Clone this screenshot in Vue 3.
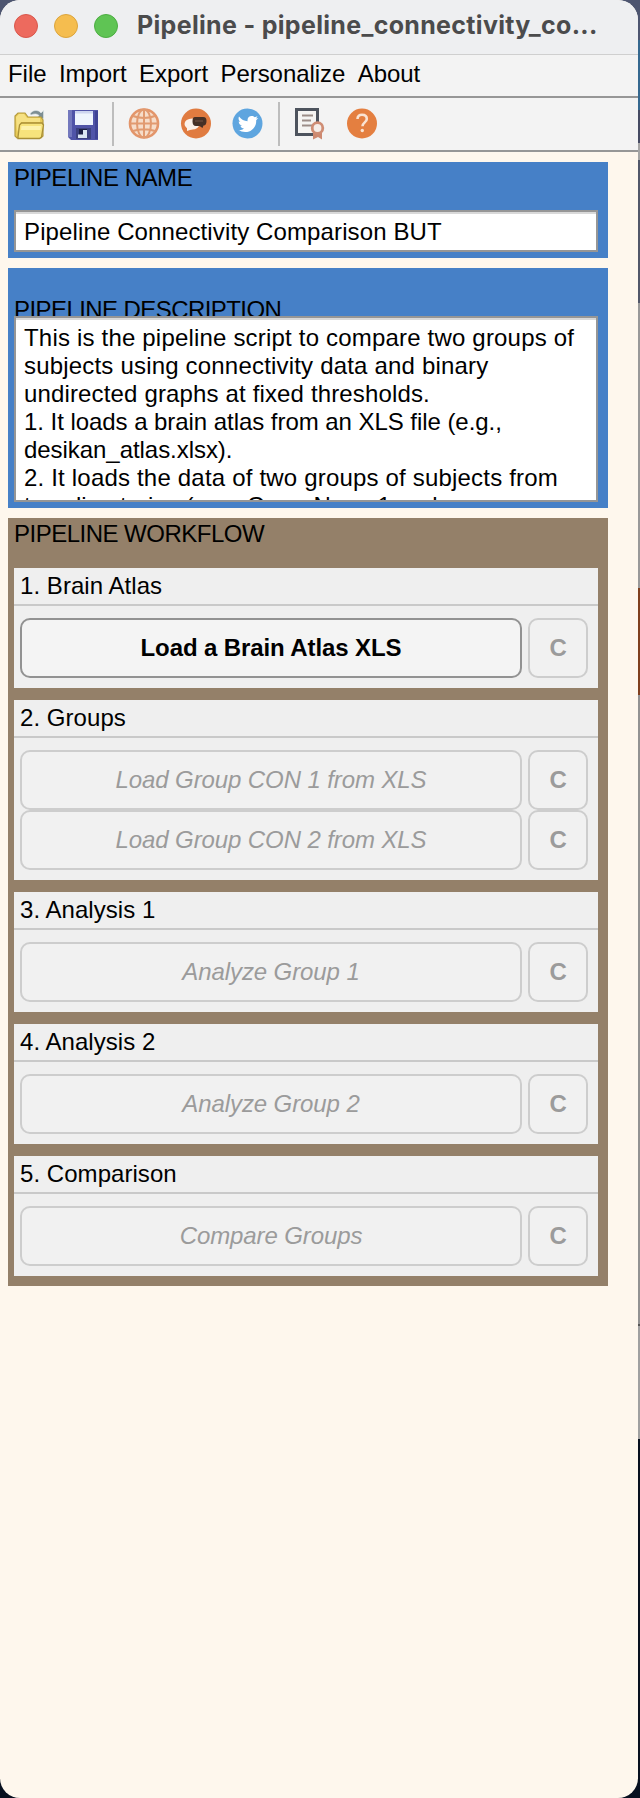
<script setup>
const menus = ['File', 'Import', 'Export', 'Personalize', 'About']

const description = [
  'This is the pipeline script to compare two groups of',
  'subjects using connectivity data and binary',
  'undirected graphs at fixed thresholds.',
  '1. It loads a brain atlas from an XLS file (e.g.,',
  'desikan_atlas.xlsx).',
  '2. It loads the data of two groups of subjects from',
  'two directories (e.g., GroupName1 and',
]

const steps = [
  { title: '1. Brain Atlas', actions: [{ label: 'Load a Brain Atlas XLS', enabled: true }] },
  {
    title: '2. Groups',
    actions: [{ label: 'Load Group CON 1 from XLS' }, { label: 'Load Group CON 2 from XLS' }],
  },
  { title: '3. Analysis 1', actions: [{ label: 'Analyze Group 1' }] },
  { title: '4. Analysis 2', actions: [{ label: 'Analyze Group 2' }] },
  { title: '5. Comparison', actions: [{ label: 'Compare Groups' }] },
]
</script>

<template>
  <div class="desktop">
    <div class="window">
      <header class="titlebar">
        <span class="light red"></span>
        <span class="light yellow"></span>
        <span class="light green"></span>
        <h1>Pipeline - pipeline_connectivity_co...</h1>
      </header>

      <nav class="menubar">
        <span v-for="m in menus" :key="m">{{ m }}</span>
      </nav>

      <div class="toolbar">
        <svg class="icon open" viewBox="0 0 32 32">
          <path d="M16 6c2-4 8-5 11-1l2.500-2.500v8h-7l2.500-3c-2-2-5-2-8-.5z" fill="#7d8e93" stroke="#dfe8ea" stroke-width=".6" />
          <path d="M1 28V8l3-3h7l3 4h13l2 3v16l-2 2H3z" fill="#e8cb58" stroke="#b59b3e" stroke-width="1.200" />
          <path d="M2 9l3-3h5l3 4h13v4H7L3 24z" fill="#f6e183" />
          <path d="M4 29l1.500-12 2-2H28l1.500 2-2 12-2 1.500H4z" fill="#f7e37c" stroke="#a98f36" stroke-width="1.300" />
          <path d="M7.500 18H27l-.5 4H7z" fill="#fdf2ac" />
        </svg>
        <svg class="icon save" viewBox="0 0 32 32">
          <path d="M1 2h30v30H4l-3-3z" fill="#5054a8" />
          <path d="M1 2h4v27H1z" fill="#7378bd" />
          <path d="M28 3h3v28h-3z" fill="#3f4395" />
          <path d="M8 3h18v14H8z" fill="#eef4fd" />
          <path d="M8 3h18v2.500H8z" fill="#cdd5f0" />
          <path d="M9 20h15v11H9z" fill="#3c4180" />
          <path d="M12 21h8v6h-8z" fill="#1d2146" />
          <path d="M16 22h4v8h-9v-3.500h5z" fill="#dbe6f3" />
        </svg>
        <i class="separator first"></i>
        <svg class="icon" viewBox="0 0 32 32">
          <circle cx="16" cy="15.500" r="14" fill="#f6ddca" stroke="#e3956a" stroke-width="2.600" />
          <g fill="none" stroke="#e19a70" stroke-width="2">
            <ellipse cx="16" cy="15.500" rx="7" ry="14" />
            <path d="M16 1.500v28M2 15.500h28M5 8c6 2.500 16 2.500 22 0M5 23c6-2.500 16-2.500 22 0" />
          </g>
        </svg>
        <svg class="icon" viewBox="0 0 32 32">
          <circle cx="16" cy="15.500" r="15" fill="#e07b40" />
          <ellipse cx="12" cy="16" rx="7.500" ry="5.500" fill="#fbf1e9" />
          <path d="M7 19l0 4 6-2z" fill="#fbf1e9" />
          <path d="M15 9h8c2.800 0 3.500 1.500 3.500 4s-.7 4.500-3 4.500L22.500 20l-3-2H16c-2.500 0-3.500-2-3.500-4.500S13 9 15 9z" fill="#453026" />
          <path d="M15 13h8" stroke="#65493b" stroke-width="1.500" />
        </svg>
        <svg class="icon" viewBox="0 0 32 32">
          <circle cx="15.500" cy="15.500" r="15" fill="#5ea5df" />
          <path
            d="M7 8.500c2.500 3 5 4.500 8.600 4.700-.6-3.200 1.500-5.200 4-5.200 1.300 0 2.300.5 3.100 1.300l2.800-1-1.400 2.300 2.200-.5-2.100 2.200c.3 6.500-4.500 11.700-11 11.700-2.600 0-4.700-.6-6.700-1.900 2.200.2 4-.4 5.500-1.500-1.900-.2-3-1.200-3.600-2.900h1.700C8 16.900 6.800 15.500 6.700 13.400l1.700.5C6.600 12.400 6.100 10.500 7 8.500z"
            fill="#fff"
          />
        </svg>
        <i class="separator"></i>
        <svg class="icon" viewBox="0 0 32 32">
          <path d="M2.500 1.500h21v25h-21z" fill="#f5f4f2" stroke="#4d535d" stroke-width="3" />
          <path d="M8 7.500h11M8 12.500h9M8 17.500h11" stroke="#9c8d87" stroke-width="1.800" />
          <path d="M19 22h9v9.500l-4-2.500-5 2.500z" fill="#cd8970" />
          <circle cx="23.500" cy="20" r="5.300" fill="#f5ede8" stroke="#cf8d74" stroke-width="2.800" />
        </svg>
        <svg class="icon" viewBox="0 0 32 32">
          <circle cx="16" cy="15.500" r="15" fill="#e47f40" />
          <path d="M11.500 11c0-3 2-4.200 4.500-4.200 3 0 4.800 1.600 4.800 4.200 0 3.400-4.300 3.400-4.300 7.200" fill="none" stroke="#fae3d2" stroke-width="2.600" />
          <circle cx="16.300" cy="22.500" r="1.700" fill="#fae3d2" />
        </svg>
      </div>

      <main>
        <section class="panel blue title">
          <h2>PIPELINE NAME</h2>
          <div class="field name">Pipeline Connectivity Comparison BUT</div>
        </section>

        <section class="panel blue desc">
          <h2>PIPELINE DESCRIPTION</h2>
          <div class="field text">
            <p v-for="(line, i) in description" :key="i">{{ line }}</p>
          </div>
        </section>

        <section class="panel brown">
          <h2>PIPELINE WORKFLOW</h2>
          <div class="steps">
            <article v-for="s in steps" :key="s.title" class="step">
              <h3>{{ s.title }}</h3>
              <div class="actions">
                <template v-for="a in s.actions" :key="a.label">
                  <button :class="{ enabled: a.enabled }" :disabled="!a.enabled">{{ a.label }}</button>
                  <button class="clear" disabled>C</button>
                </template>
              </div>
            </article>
          </div>
        </section>
      </main>
    </div>
  </div>
</template>

<style>
body {
  margin: 0;
}
</style>

<style scoped>
* {
  box-sizing: border-box;
}
.desktop {
  width: 640px;
  height: 1798px;
  overflow: hidden;
  font: 24px/28px "Liberation Sans", Arial, sans-serif;
  color: #000;
  background: linear-gradient(
    #4d5570 0 40px, #35688f 40px 110px, #454a62 110px 143px, #a5a5a5 143px 160px,
    #525769 160px 303px, #999 303px 588px, #7f3f1e 588px 695px,
    #929292 695px 1324px, #555 1324px 1326px, #a0a0a0 1326px 1439px, #07101f 1439px
  );
}
.window {
  width: 638px;
  height: 1798px;
  overflow: hidden;
  border-radius: 20px;
  background: #fef7ed;
}
.titlebar {
  height: 55px;
  padding: 0 0 3px 14px;
  display: flex;
  align-items: center;
  gap: 16px;
  background: #eeeff1;
  border-bottom: 1px solid #cfcfcf;
}
.light {
  width: 24px;
  height: 24px;
  border-radius: 50%;
  border: 1px solid;
}
.red { background: #ed6a5e; border-color: #d8574c; }
.yellow { background: #f5bd4f; border-color: #dba43c; }
.green { background: #5fc454; border-color: #4cad42; }
h1 {
  margin: 0 0 2px 3px;
  font: 700 25px/30px Inter, sans-serif;
  letter-spacing: 0.320px;
  color: #4b4b4c;
  white-space: nowrap;
}
.menubar {
  height: 43px;
  padding: 5px 8px 0;
  display: flex;
  gap: 12.400px;
  letter-spacing: -0.050px;
  background: #f3f3f3;
  border-bottom: 2px solid #969696;
}
.toolbar {
  height: 54px;
  padding: 0 14px;
  display: flex;
  align-items: center;
  background: #f3f3f3;
  border-bottom: 2px solid #969696;
}
.icon {
  width: 32px;
  height: 32px;
  margin-right: 20px;
}
.open { margin-right: 21px; }
.save { margin-right: 13px; }
.separator {
  width: 2px;
  height: 44px;
  margin: 0 14px 0 -6px;
  background: #bdbdbd;
}
.separator.first { margin-left: 0; }
main {
  width: 608px;
  padding: 10px 0 0 8px;
  display: flex;
  flex-direction: column;
  gap: 10px;
}
.panel {
  padding: 0 10px 6px 6px;
}
.blue { background: #4680c7; }
.brown { background: #948069; padding-bottom: 10px; }
h2 {
  margin: 0;
  height: 48px;
  padding-top: 2px;
  font: inherit;
  letter-spacing: -0.510px;
  white-space: nowrap;
}
.title h2 { letter-spacing: -0.450px; }
.brown h2 { height: 50px; }
.desc h2 {
  padding-top: 28px;
  letter-spacing: -0.570px;
  overflow: hidden;
}
.field {
  background: #fff;
  border: 2px solid #969696;
  box-shadow: inset 0 2px #d9d9d9;
  padding-left: 8px;
  white-space: nowrap;
}
.name {
  height: 42px;
  padding-top: 6px;
  letter-spacing: 0.120px;
}
.text {
  height: 186px;
  padding-top: 6px;
  overflow: hidden;
}
p {
  margin: 0;
  letter-spacing: 0.190px;
}
p:nth-child(3) { letter-spacing: 0.150px; }
p:nth-child(4),
p:nth-child(5) { letter-spacing: -0.050px; }
p:nth-child(7) { letter-spacing: 0; }
.steps {
  display: flex;
  flex-direction: column;
  gap: 12px;
}
.step { background: #efefef; }
h3 {
  margin: 0;
  height: 38px;
  padding: 4px 6px 0;
  font: inherit;
  letter-spacing: 0.050px;
  border-bottom: 2px solid #c9c9c9;
}
.actions {
  padding: 12px 10px 10px 6px;
  display: grid;
  grid-template-columns: 502px 60px;
  column-gap: 6px;
}
button {
  height: 60px;
  padding: 0;
  border: 2px solid #cdcdcd;
  border-radius: 10px;
  background: #f1f1f1;
  font: italic 24px/28px "Liberation Sans", Arial, sans-serif;
  letter-spacing: -0.100px;
  color: #9b9b9b;
}
button.enabled {
  background: #f4f4f4;
  border-color: #929292;
  color: #000;
  font-style: normal;
  font-weight: 700;
}
button.clear {
  font-style: normal;
  font-weight: 700;
}
</style>
